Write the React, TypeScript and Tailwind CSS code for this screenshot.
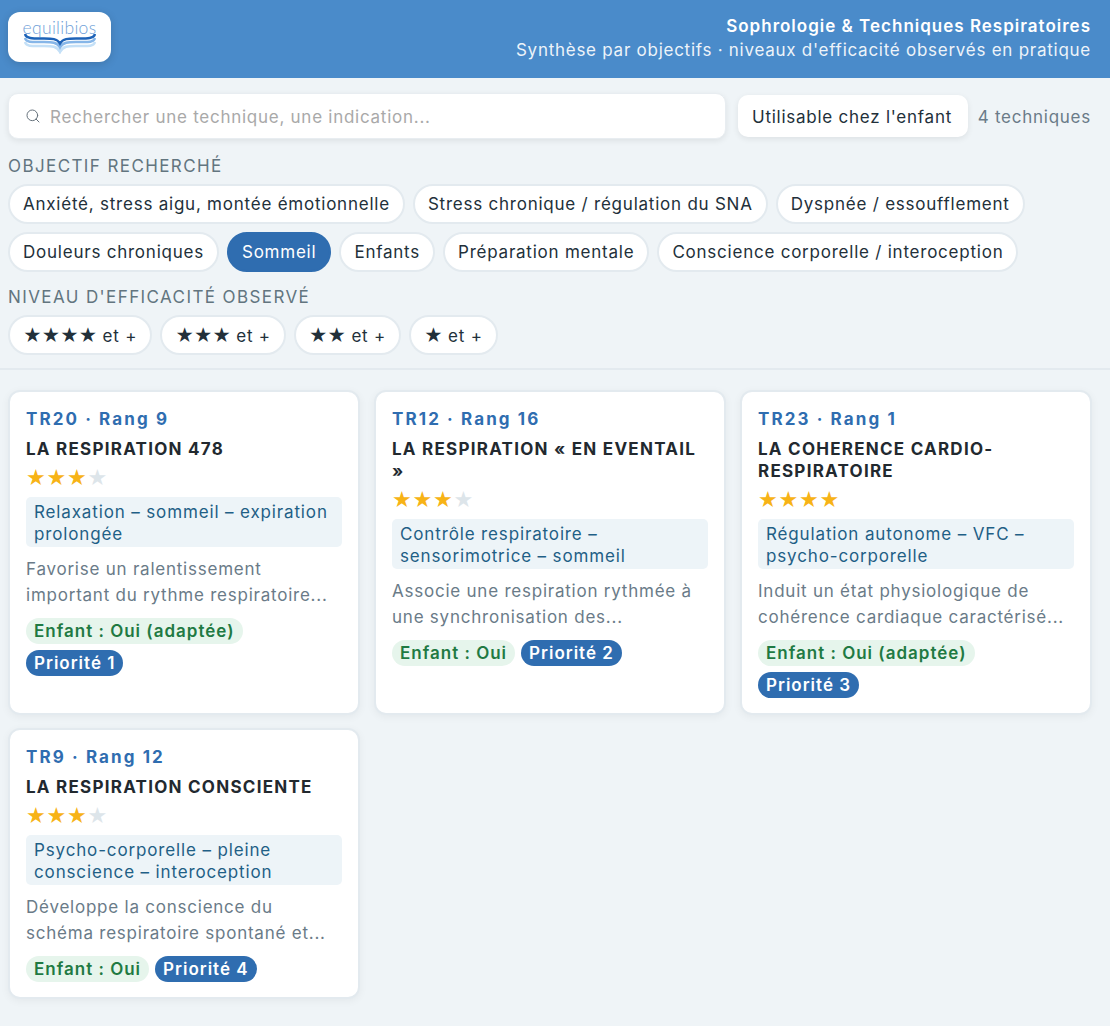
import React from "react";
import { Search } from "lucide-react";

const objectifs = [
  "Anxiété, stress aigu, montée émotionnelle",
  "Stress chronique / régulation du SNA",
  "Dyspnée / essoufflement",
  "Douleurs chroniques",
  "Sommeil",
  "Enfants",
  "Préparation mentale",
  "Conscience corporelle / interoception",
];

const niveaux = ["★★★★", "★★★", "★★", "★"];

const cards = [
  {
    id: "TR20 · Rang 9",
    title: "LA RESPIRATION 478",
    stars: 3,
    tag: "Relaxation – sommeil – expiration prolongée",
    desc: "Favorise un ralentissement important du rythme respiratoire...",
    child: "Enfant : Oui (adaptée)",
    prio: "Priorité 1",
  },
  {
    id: "TR12 · Rang 16",
    title: "LA RESPIRATION « EN EVENTAIL »",
    stars: 3,
    tag: "Contrôle respiratoire – sensorimotrice – sommeil",
    desc: "Associe une respiration rythmée à une synchronisation des...",
    child: "Enfant : Oui",
    prio: "Priorité 2",
  },
  {
    id: "TR23 · Rang 1",
    title: "LA COHERENCE CARDIO-RESPIRATOIRE",
    stars: 4,
    tag: "Régulation autonome – VFC – psycho-corporelle",
    desc: "Induit un état physiologique de cohérence cardiaque caractérisé...",
    child: "Enfant : Oui (adaptée)",
    prio: "Priorité 3",
  },
  {
    id: "TR9 · Rang 12",
    title: "LA RESPIRATION CONSCIENTE",
    stars: 3,
    tag: "Psycho-corporelle – pleine conscience – interoception",
    desc: "Développe la conscience du schéma respiratoire spontané et...",
    child: "Enfant : Oui",
    prio: "Priorité 4",
  },
];

const Logo = () => (
  <div className="w-[103px] h-[50px] bg-white rounded-[12px] shadow-[0_2px_8px_rgba(0,0,0,0.15)] flex flex-col items-center pt-[9px]">
    <span className="font-['Lato'] font-light text-[17.5px] leading-[14px] text-[#6f9fd8] tracking-[0.3px]">
      equilibios
    </span>
    <svg width="72" height="20" viewBox="0 0 72 20" className="-mt-[1px]" fill="none">
      <path d="M1 8 C2 13 10 12 20 12 C28 12 33 12 36 18 C39 12 44 12 52 12 C62 12 70 13 71 8" stroke="#c4e0f7" strokeWidth="2.5" />
      <path d="M1 4 C2 9 10 8 20 8 C28 8 33 8 36 13.5 C39 8 44 8 52 8 C62 8 70 9 71 4" stroke="#86b6e8" strokeWidth="2.5" />
      <path d="M1 0 C2 5 10 4.5 20 4.5 C28 4.5 33 4.5 36 9.5 C39 4.5 44 4.5 52 4.5 C62 4.5 70 5 71 0" stroke="#1e63b8" strokeWidth="2.5" />
    </svg>
  </div>
);

const Chip = ({ label, active }: { label: React.ReactNode; active?: boolean }) => (
  <button
    className={
      active
        ? "h-[40px] px-[13px] pt-[1px] rounded-full bg-[#2f6db0] border-2 border-[#2f6db0] text-white text-[17px] tracking-[0.77px]"
        : "h-[40px] px-[13px] pt-[1px] rounded-full bg-white border-2 border-[#e3eaef] text-[#22303a] text-[17px] tracking-[0.77px]"
    }
  >
    {label}
  </button>
);

const Card = ({ card }: { card: (typeof cards)[number] }) => (
  <div className="bg-white rounded-[12px] border-2 border-[#e3eaef] shadow-[0_2px_8px_rgba(0,0,0,0.05)] px-[16px] pt-[15px] pb-[15px] flex flex-col items-start">
    <div className="text-[#2f6db0] font-bold text-[17px] leading-[24px] tracking-[2.1px]">{card.id}</div>
    <div className="mt-[7px] text-[#22292f] font-bold text-[17px] leading-[22px] tracking-[1.25px]">{card.title}</div>
    <div className="mt-[6px] text-[22px] leading-[24px] tracking-[0.8px] font-['DejaVu_Sans']">
      <span className="text-[#f7b316]">{"★".repeat(card.stars)}</span>
      <span className="text-[#dde5ea]">{"★".repeat(4 - card.stars)}</span>
    </div>
    <div className="mt-[7px] w-full bg-[#edf4f8] rounded-[5px] px-[8px] pt-[4px] pb-[2px] text-[#1f5f86] text-[17px] leading-[22px] tracking-[0.86px]">
      {card.tag}
    </div>
    <p className="mt-[9px] text-[#6a7b88] text-[17px] leading-[26px] tracking-[0.77px]">{card.desc}</p>
    <div className="mt-[10px] flex flex-wrap gap-x-[6px] gap-y-[6px]">
      <span className="h-[26px] px-[8px] rounded-full bg-[#e6f5ec] text-[#1f7a43] font-semibold text-[17px] leading-[26px] tracking-[1px]">
        {card.child}
      </span>
      <span className="h-[26px] px-[8px] rounded-full bg-[#2f6db0] text-white font-semibold text-[17px] leading-[26px] tracking-[1px]">
        {card.prio}
      </span>
    </div>
  </div>
);

export default function App() {
  return (
    <div className="min-h-[1026px] bg-[#eff4f7] font-['Inter',sans-serif]">
      <header className="h-[78px] bg-[#4a8bca] pl-[8px] pr-[19px] pt-[12px] flex justify-between">
        <Logo />
        <div className="text-right text-white pt-[2px]">
          <div className="font-semibold text-[17px] leading-[24px] tracking-[1px]">Sophrologie &amp; Techniques Respiratoires</div>
          <div className="text-[17px] leading-[24px] tracking-[0.74px] opacity-90">
            Synthèse par objectifs · niveaux d'efficacité observés en pratique
          </div>
        </div>
      </header>

      <section className="pl-[8px] pr-[19px] pt-[15px] pb-[13px] border-b-2 border-[#e3eaef]">
        <div className="flex items-center">
          <div className="w-[718px] h-[46px] bg-white rounded-[10px] border border-[#e8edf1] shadow-[0_2px_6px_rgba(0,0,0,0.08)] flex items-center pl-[16px] gap-[9px]">
            <Search size={16} strokeWidth={1.5} className="text-[#66727c]" />
            <span className="pt-[3px] text-[#a9a9a9] text-[17px] tracking-[0.74px]">Rechercher une technique, une indication...</span>
          </div>
          <button className="ml-[12px] h-[42px] pl-[14px] pr-[16px] pt-[4px] bg-white rounded-[10px] shadow-[0_2px_6px_rgba(0,0,0,0.08)] text-[#22303a] text-[17px] tracking-[0.75px]">
            Utilisable chez l'enfant
          </button>
          <span className="ml-auto pt-[4px] text-[#6a7b88] text-[17px] tracking-[0.75px]">4 techniques</span>
        </div>

        <div className="mt-[15px] text-[#62757f] text-[17px] leading-[24px] tracking-[1.4px]">OBJECTIF RECHERCHÉ</div>
        <div className="mt-[6px] flex flex-wrap gap-x-[8px] gap-y-[8px]">
          {objectifs.map((o) => (
            <Chip key={o} label={o} active={o === "Sommeil"} />
          ))}
        </div>

        <div className="mt-[13px] text-[#62757f] text-[17px] leading-[24px] tracking-[1.4px]">NIVEAU D'EFFICACITÉ OBSERVÉ</div>
        <div className="mt-[6px] flex gap-[8px]">
          {niveaux.map((n) => (
            <Chip
              key={n}
              label={
                <>
                  <span className="text-[18px] tracking-[-0.3px]">{n}</span> et +
                </>
              }
            />
          ))}
        </div>
      </section>

      <main className="px-[8px] pt-[20px] grid grid-cols-3 gap-x-[14px] gap-y-[13px] w-[1100px]">
        {cards.map((c) => (
          <Card key={c.id} card={c} />
        ))}
      </main>
    </div>
  );
}
